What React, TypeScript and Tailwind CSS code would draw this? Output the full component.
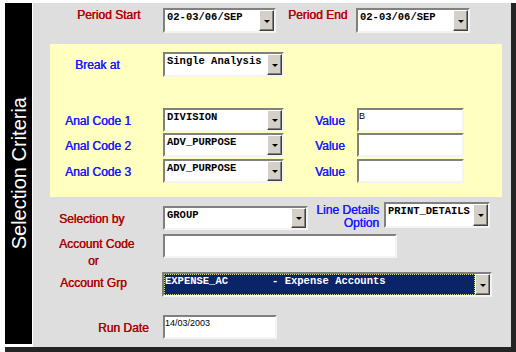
import { clsx } from "clsx"

const mono = "font-['Liberation_Mono','Courier_New',monospace] font-bold text-[10.5px] leading-[12px]"

function Arrow() {
  return <div className="w-[15px] h-full bg-[#d4d0c8] border border-t-white border-l-white border-b-[#404040] border-r-[#404040] shadow-[inset_-1px_-1px_0_#808080] flex items-center justify-center">
    <div className="w-0 h-0 border-l-[3px] border-r-[3px] border-t-[3px] border-l-transparent border-r-transparent border-t-black mt-[1px]"></div>
  </div>
}

function Combo({ value, className, selected }: { value?: string, className: string, selected?: boolean }) {
  return <div className={clsx("flex bg-white border-2 border-t-[#808080] border-l-[#808080] border-b-[#f4f4f4] border-r-[#f4f4f4] shrink-0", className)}>
    {selected
      ? <div className={clsx("flex-1 bg-[#0a246a] text-white border border-dotted border-[#d8d8a0] whitespace-pre overflow-hidden", mono)}>{value}</div>
      : <div className={clsx("flex-1 pl-[2px] pt-[1px] text-black whitespace-pre overflow-hidden", mono)}>{value}</div>}
    <Arrow />
  </div>
}

function Input({ value, className }: { value?: string, className: string }) {
  return <div className={clsx("bg-white border-2 border-t-[#808080] border-l-[#808080] border-b-[#f4f4f4] border-r-[#f4f4f4] text-[9px] leading-[10px] pt-[1px] text-black shrink-0", className)}>
    {value}
  </div>
}

function Label({ text, className, blue }: { text: string, className: string, blue?: boolean }) {
  return <div className={clsx("text-[12px] leading-[14px] whitespace-nowrap shrink-0 [text-shadow:0.4px_0_0_currentColor]", blue ? "text-[#1818ff]" : "text-[#b00000]", className)}>
    {text}
  </div>
}

export default function App() {
  return <div className="w-[516px] h-[352px] bg-white pl-[5px] pt-[3px] font-['Liberation_Sans',Arial,sans-serif]">
    <div className="flex w-[511px] h-[349px] border-r-[5px] border-b-[5px] border-[#242424] bg-white">
      <div className="w-[27px] h-[341px] bg-black flex items-center justify-center shrink-0">
        <span className="text-white text-[20px] leading-none [writing-mode:vertical-rl] rotate-180 whitespace-nowrap">Selection Criteria</span>
      </div>
      <div className="ml-px flex-1 bg-[#dedede] flex flex-col pt-[5px]">

        <div className="flex items-start h-[25px]">
          <Label text="Period Start" className="w-[130px] pl-[44px]" />
          <Combo value="02-03/06/SEP" className="w-[113px] h-[25px]" />
          <Label text="Period End" className="w-[68px] ml-[12px]" />
          <Combo value="02-03/06/SEP" className="w-[114px] h-[25px]" />
        </div>

        <div className="ml-[17px] mt-[11px] w-[452px] h-[153px] bg-[#ffffc0] flex flex-col pt-[8px]">
          <div className="flex items-start">
            <Label blue text="Break at" className="w-[113px] pl-[25px] pt-[6px]" />
            <Combo value="Single Analysis" className="w-[121px] h-[25px]" />
          </div>
          {["DIVISION", "ADV_PURPOSE", "ADV_PURPOSE"].map((code, i) => (
            <div key={i} className={clsx("flex items-start", i === 0 ? "mt-[31px]" : i === 1 ? "mt-[1px]" : "mt-[2px]")}>
              <Label blue text={"Anal Code " + (i + 1)} className="w-[113px] pl-[15px] pt-[6px]" />
              <Combo value={code} className="w-[121px] h-[24px]" />
              <Label blue text="Value" className="w-[42px] ml-[31px] pt-[6px]" />
              <Input value={i === 0 ? "B" : ""} className="w-[107px] h-[24px]" />
            </div>
          ))}
        </div>

        <div className="flex items-start mt-[5px] h-[28px]">
          <Label text="Selection by" className="w-[130px] pl-[26px] pt-[10px]" />
          <Combo value="GROUP" className="w-[145px] h-[24px] mt-[4px]" />
          <div className="w-[76px] pr-[5px] pt-[2px] text-right text-[12px] leading-[13px] text-[#1818ff] shrink-0 [text-shadow:0.4px_0_0_currentColor]">
            Line Details<br />Option
          </div>
          <Combo value="PRINT_DETAILS" className="w-[106px] h-[26px]" />
        </div>

        <div className="flex items-start mt-[4px] h-[24px]">
          <Label text="Account Code" className="w-[130px] pl-[26px] pt-[3px]" />
          <Input className="w-[234px] h-[24px]" />
        </div>
        <Label text="or" className="-mt-[4px] h-[14px] pl-[55px]" />

        <div className="flex items-start mt-[4px] h-[25px]">
          <Label text="Account Grp" className="w-[129px] pl-[27px] pt-[4px]" />
          <Combo selected value="EXPENSE_AC       - Expense Accounts" className="w-[330px] h-[25px]" />
        </div>

        <div className="flex items-start mt-[18px] h-[24px]">
          <Label text="Run Date" className="w-[130px] pl-[65px] pt-[6px]" />
          <Input value="14/03/2003" className="w-[114px] h-[24px]" />
        </div>
      </div>
    </div>
  </div>
}
